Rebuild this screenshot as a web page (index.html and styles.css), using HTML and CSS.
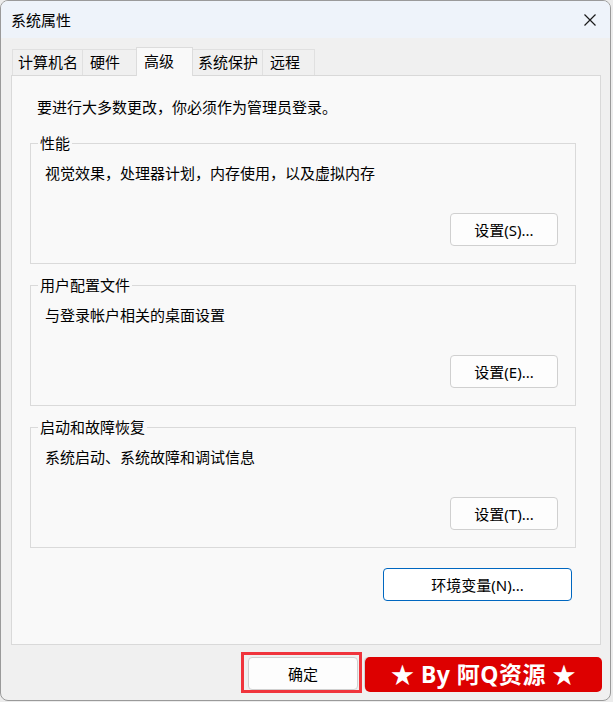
FILE: index.html
```html
<!DOCTYPE html>
<html lang="zh-CN">
<head>
<meta charset="utf-8">
<title>系统属性</title>
<link rel="stylesheet" href="styles.css">
</head>
<body>
<div class="window">
  <div class="titlebar">
    <span class="title">系统属性</span>
    <span class="close">
      <svg width="14" height="14" viewBox="0 0 14 14"><path d="M1.5 1.5 L12.5 12.5 M12.5 1.5 L1.5 12.5" stroke="#1a1a1a" stroke-width="1.2" fill="none"/></svg>
    </span>
  </div>
  <div class="tabs">
    <div class="tab t1">计算机名</div>
    <div class="tab t2">硬件</div>
    <div class="tab t3 active">高级</div>
    <div class="tab t4">系统保护</div>
    <div class="tab t5">远程</div>
  </div>
  <div class="panel">
    <p class="intro">要进行大多数更改，你必须作为管理员登录。</p>
    <fieldset class="group">
      <legend>性能</legend>
      <p class="desc">视觉效果，处理器计划，内存使用，以及虚拟内存</p>
      <div class="btnrow"><button class="btn">设置(S)...</button></div>
    </fieldset>
    <fieldset class="group">
      <legend>用户配置文件</legend>
      <p class="desc">与登录帐户相关的桌面设置</p>
      <div class="btnrow"><button class="btn">设置(E)...</button></div>
    </fieldset>
    <fieldset class="group">
      <legend>启动和故障恢复</legend>
      <p class="desc">系统启动、系统故障和调试信息</p>
      <div class="btnrow"><button class="btn">设置(T)...</button></div>
    </fieldset>
    <div class="envrow"><button class="btn env">环境变量(N)...</button></div>
  </div>
  <div class="footer">
    <span class="highlight"><button class="btn ok">确定</button></span>
    <span class="btn cancel"></span>
    <div class="banner">★ By 阿Q资源 ★</div>
  </div>
</div>
</body>
</html>
```

FILE: styles.css
```css
* { box-sizing: border-box; }
html, body { margin: 0; padding: 0; }
body {
  background: #ececec;
  font-family: "Noto Sans", "Noto Sans CJK SC", sans-serif;
  font-size: 15px;
  color: #000;
  width: 613px;
  height: 702px;
  overflow: hidden;
}
.window {
  width: 611px;
  height: 701px;
  border: 1px solid #9a9a9a;
  border-radius: 8px;
  background: #f0f0f0;
  overflow: hidden;
  display: flex;
  flex-direction: column;
  position: relative;
}
.titlebar {
  height: 37px;
  background: #eef3fa;
  display: flex;
  align-items: center;
  justify-content: space-between;
  padding: 0 13px 0 10px;
  flex: none;
}
.title { font-size: 15px; line-height: 20px; }
.close { display: flex; width: 14px; height: 14px; }
.tabs {
  display: flex;
  align-items: flex-end;
  height: 37px;
  padding-left: 11px;
  flex: none;
}
.tab {
  height: 26px;
  line-height: 24px;
  border: 1px solid #e0e0e0;
  border-bottom: none;
  background: #f0f0f0;
  padding-left: 5px;
  white-space: nowrap;
  margin-left: -1px;
}
.t1 { width: 71px; margin-left: 0; }
.t2 { width: 55px; padding-left: 7px; }
.t3 { width: 57px; padding-left: 7px; }
.t4 { width: 71px; }
.t5 { width: 53px; padding-left: 7px; }
.tab.active {
  height: 29px;
  line-height: 26px;
  background: #f9f9f9;
  position: relative;
  z-index: 1;
  margin-bottom: -1px;
  border-color: #dcdcdc;
}
.panel {
  margin-left: 10px;
  width: 590px;
  height: 570px;
  background: #f9f9f9;
  border: 1px solid #d9d9d9;
  padding: 21px 0 0 18px;
  flex: none;
}
.intro { margin: 0 0 16px 7px; line-height: 20px; height: 20px; }
.group {
  margin: 0 0 11px 0;
  padding: 0;
  width: 546px;
  height: 131px;
  border: 1px solid #dadada;
  border-radius: 0;
}
.group legend {
  margin-left: 7px;
  padding: 0 2px;
  line-height: 20px;
}
.desc { margin: 10px 0 0 14px; line-height: 20px; height: 20px; }
.btnrow {
  display: flex;
  justify-content: flex-end;
  padding-right: 17px;
  margin-top: 30px;
}
.btn {
  font-family: "Noto Sans", "Noto Sans CJK SC", sans-serif;
  font-size: 15px;
  color: #000;
  height: 33px;
  width: 108px;
  background: #fdfdfd;
  border: 1px solid #d0d0d0;
  border-radius: 4px;
  padding: 0;
  line-height: 20px;
}
.envrow {
  display: flex;
  justify-content: flex-end;
  padding-right: 28px;
  margin-top: 20px;
}
.btn.env {
  width: 189px;
  border: 1.5px solid #0067c0;
  background: #fff;
}
.footer {
  display: flex;
  align-items: flex-start;
  padding: 7px 0 0 240px;
  position: relative;
  flex: 1;
}
.highlight {
  display: inline-block;
  border: 3px solid #f0343c;
  padding: 2px 1px 0 4px;
}
.btn.ok { width: 110px; display: block; }
.btn.cancel { display: block; width: 110px; margin: 5px 0 0 2px; }
.banner {
  position: absolute;
  left: 364px;
  top: 12px;
  width: 237px;
  height: 35px;
  background: #dd0000;
  border-radius: 5px;
  color: #fff;
  font-weight: bold;
  font-size: 23px;
  line-height: 35px;
  text-align: center;
  letter-spacing: 0.5px;
  white-space: nowrap;
}
```
